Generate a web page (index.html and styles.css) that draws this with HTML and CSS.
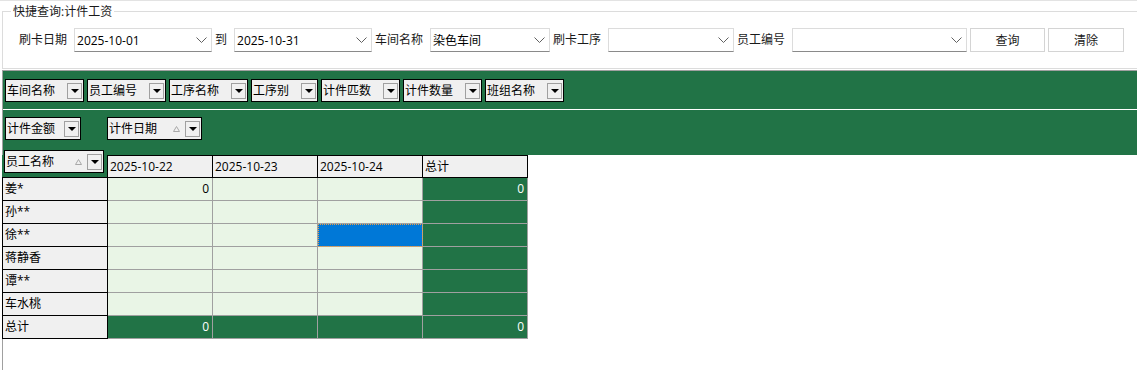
FILE: index.html
```html
<!DOCTYPE html>
<html lang="zh">
<head>
<meta charset="utf-8">
<title>快捷查询:计件工资</title>
<link rel="stylesheet" href="styles.css">
</head>
<body>
<div class="topline"></div>
<div class="group">
  <div class="legend">快捷查询:计件工资</div>
  <div class="qrow">
    <span class="lbl">刷卡日期</span>
    <div class="combo w138"><span>2025-10-01</span><svg class="chev" width="11" height="6" viewBox="0 0 11 6"><polyline points="0.5,0.5 5.5,5.5 10.5,0.5" fill="none" stroke="#606060" stroke-width="1"/></svg></div>
    <span class="lbl">到</span>
    <div class="combo w138"><span>2025-10-31</span><svg class="chev" width="11" height="6" viewBox="0 0 11 6"><polyline points="0.5,0.5 5.5,5.5 10.5,0.5" fill="none" stroke="#606060" stroke-width="1"/></svg></div>
    <span class="lbl">车间名称</span>
    <div class="combo w120"><span>染色车间</span><svg class="chev" width="11" height="6" viewBox="0 0 11 6"><polyline points="0.5,0.5 5.5,5.5 10.5,0.5" fill="none" stroke="#606060" stroke-width="1"/></svg></div>
    <span class="lbl">刷卡工序</span>
    <div class="combo w126"><span></span><svg class="chev" width="11" height="6" viewBox="0 0 11 6"><polyline points="0.5,0.5 5.5,5.5 10.5,0.5" fill="none" stroke="#606060" stroke-width="1"/></svg></div>
    <span class="lbl">员工编号</span>
    <div class="combo w175"><span></span><svg class="chev" width="11" height="6" viewBox="0 0 11 6"><polyline points="0.5,0.5 5.5,5.5 10.5,0.5" fill="none" stroke="#606060" stroke-width="1"/></svg></div>
    <button class="btn w75">查询</button>
    <button class="btn w76">清除</button>
  </div>
</div>
<div class="pivot">
  <div class="band">
    <div class="frow">
      <div class="fbtn w79">车间名称<span class="dd"></span></div>
      <div class="fbtn w79">员工编号<span class="dd"></span></div>
      <div class="fbtn w79">工序名称<span class="dd"></span></div>
      <div class="fbtn w67">工序别<span class="dd"></span></div>
      <div class="fbtn w79">计件匹数<span class="dd"></span></div>
      <div class="fbtn w79">计件数量<span class="dd"></span></div>
      <div class="fbtn w79">班组名称<span class="dd"></span></div>
    </div>
    <div class="sep"></div>
    <div class="frow">
      <div class="fbtn w76">计件金额<span class="dd"></span></div>
      <div class="fbtn w95 colfield">计件日期<svg class="sort" width="7" height="6" viewBox="0 0 7 6"><polygon points="3.5,0.5 6.5,5.5 0.5,5.5" fill="none" stroke="#a8a8a8" stroke-width="1"/></svg><span class="dd"></span></div>
    </div>
  </div>
  <div class="grid">
    <div class="rf"><div class="fbtn w100">员工名称<svg class="sort" width="7" height="6" viewBox="0 0 7 6"><polygon points="3.5,0.5 6.5,5.5 0.5,5.5" fill="none" stroke="#a8a8a8" stroke-width="1"/></svg><span class="dd"></span></div></div>
    <div class="ch">2025-10-22</div>
    <div class="ch">2025-10-23</div>
    <div class="ch">2025-10-24</div>
    <div class="ch">总计</div>

    <div class="rh">姜*</div>
    <div class="c">0</div><div class="c"></div><div class="c"></div><div class="c tot">0</div>

    <div class="rh">孙**</div>
    <div class="c"></div><div class="c"></div><div class="c"></div><div class="c tot"></div>

    <div class="rh">徐**</div>
    <div class="c"></div><div class="c"></div><div class="c sel"></div><div class="c tot"></div>

    <div class="rh">蒋静香</div>
    <div class="c"></div><div class="c"></div><div class="c"></div><div class="c tot"></div>

    <div class="rh">谭**</div>
    <div class="c"></div><div class="c"></div><div class="c"></div><div class="c tot"></div>

    <div class="rh">车水桃</div>
    <div class="c"></div><div class="c"></div><div class="c"></div><div class="c tot"></div>

    <div class="rh">总计</div>
    <div class="c tot">0</div><div class="c tot"></div><div class="c tot"></div><div class="c tot">0</div>
  </div>
</div>
</body>
</html>
```
FILE: styles.css
```css
html, body {
  margin: 0;
  padding: 0;
  background: #fff;
}
body {
  width: 1137px;
  height: 370px;
  overflow: hidden;
  font-family: "Open Sans", "Noto Sans CJK SC", sans-serif;
  font-size: 12px;
  color: #000;
}

.topline {
  height: 1px;
  background: #e3e3e3;
}

/* group box */
.group {
  position: relative;
  margin: 10px 0 0 2px;
  border: 1px solid #dcdcdc;
  border-right: none;
  padding: 16px 0 16px 13px;
}
.legend {
  position: absolute;
  top: -7px;
  left: 8px;
  padding: 0 2px;
  background: #fff;
  line-height: 14px;
  color: #1a1a1a;
}
.qrow {
  display: flex;
  align-items: center;
  height: 24px;
}
.lbl {
  margin: 0 7px 0 3px;
  white-space: nowrap;
  line-height: 24px;
  color: #1a1a1a;
}
.combo {
  box-sizing: border-box;
  height: 24px;
  display: flex;
  align-items: center;
  padding-left: 2px;
  border: 1px solid #dcdcdc;
  border-bottom-color: #8a8a8a;
  background: #fff;
}
.combo .chev {
  margin-left: auto;
  margin-right: 4px;
}
.w138 { width: 138px; }
.w120 { width: 120px; }
.w126 { width: 126px; }
.w175 { width: 175px; }
.w75 { width: 75px; }
.w76 { width: 76px; }
.w79 { width: 79px; }
.w67 { width: 67px; }
.w95 { width: 95px; }
.w100 { width: 100px; }

.btn {
  box-sizing: border-box;
  height: 24px;
  margin: 0 0 0 3px;
  padding: 0;
  border: 1px solid #d4d4d4;
  background: #fff;
  font: inherit;
  color: #1a1a1a;
}

/* pivot grid */
.pivot {
  margin: 1px 0 0 2px;
  height: 300px;
  border-left: 1px solid #a0a0a0;
  border-top: 1px solid #a0a0a0;
}
.band {
  box-sizing: border-box;
  height: 84px;
  padding: 8px 0 0 2px;
  background: #217346;
}
.frow {
  display: flex;
  gap: 3px;
  height: 23px;
}
.sep {
  height: 1px;
  margin: 7px 0 7px -2px;
  background: #fff;
}
.colfield {
  margin-left: 23px;
}
.fbtn {
  box-sizing: border-box;
  height: 23px;
  display: flex;
  align-items: center;
  padding: 0 1px;
  border: 1px solid #000;
  background: #f0f0f0;
  white-space: nowrap;
  line-height: 1;
}
.fbtn .sort {
  margin-left: auto;
  margin-right: 5px;
}
.dd {
  box-sizing: border-box;
  width: 15px;
  height: 16px;
  margin-left: auto;
  display: flex;
  align-items: center;
  justify-content: center;
  border: 1px solid #a0a0a0;
  background: #f0f0f0;
}
.sort + .dd {
  margin-left: 0;
}
.dd::after {
  content: "";
  border-left: 4px solid transparent;
  border-right: 4px solid transparent;
  border-top: 4px solid #000;
}

.grid {
  display: grid;
  grid-template-columns: 106px repeat(4, 105px);
  grid-auto-rows: 23px;
  width: max-content;
  margin-left: -1px;
}
.grid > div {
  box-sizing: border-box;
  line-height: 22px;
  white-space: nowrap;
}
.rf {
  background: #217346;
  border-right: 1px solid #000;
  border-bottom: 1px solid #000;
}
.rf .fbtn {
  margin: -5px 0 0 2px;
}
.ch {
  background: #f0f0f0;
  border-top: 1px solid #000;
  border-right: 1px solid #000;
  border-bottom: 1px solid #000;
  padding-left: 2px;
  line-height: 21px !important;
}
.rh {
  background: #f0f0f0;
  border-left: 1px solid #000;
  border-right: 1px solid #000;
  border-bottom: 1px solid #000;
  padding-left: 2px;
}
.c {
  background: #e9f5e6;
  border-right: 1px solid #a0a0a0;
  border-bottom: 1px solid #a0a0a0;
  text-align: right;
  padding-right: 3px;
}
.c.tot {
  background: #217346;
  color: #fff;
}
.c.sel {
  background: #0078d7;
  outline: 1px dotted #e8a04a;
  outline-offset: -1px;
}
```
